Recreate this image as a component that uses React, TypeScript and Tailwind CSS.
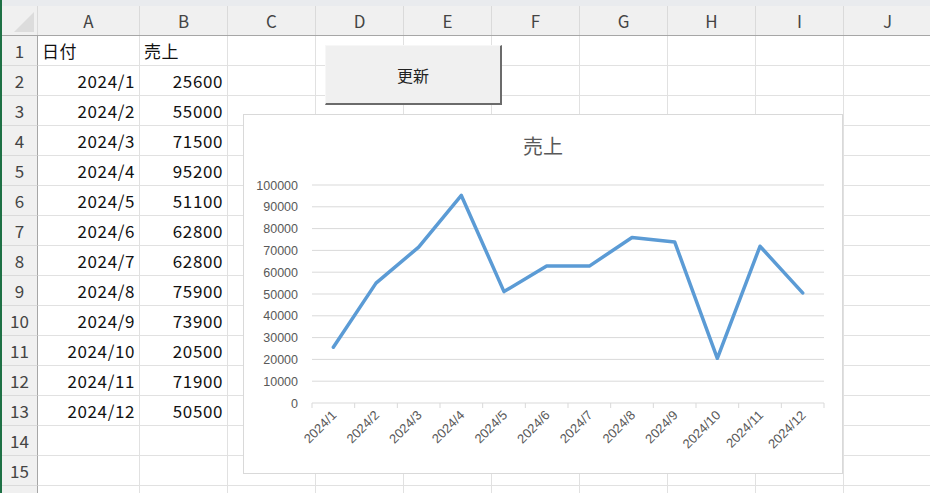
import React from "react";

const cols = ["A", "B", "C", "D", "E", "F", "G", "H", "I", "J"];
const colWidths = ["w-[102px]", "w-[88px]", "w-[88px]", "w-[88px]", "w-[88px]", "w-[88px]", "w-[88px]", "w-[88px]", "w-[88px]", "w-[88px]"];

const sales = [
  { d: "2024/1", v: 25600 },
  { d: "2024/2", v: 55000 },
  { d: "2024/3", v: 71500 },
  { d: "2024/4", v: 95200 },
  { d: "2024/5", v: 51100 },
  { d: "2024/6", v: 62800 },
  { d: "2024/7", v: 62800 },
  { d: "2024/8", v: 75900 },
  { d: "2024/9", v: 73900 },
  { d: "2024/10", v: 20500 },
  { d: "2024/11", v: 71900 },
  { d: "2024/12", v: 50500 },
];

const font = { fontFamily: '"Noto Sans CJK JP", "Noto Sans", sans-serif' };
const axisFont = { fontFamily: '"Liberation Sans", Arial, sans-serif' };

function cellText(row: number, col: number) {
  if (row === 1 && col === 0) return { t: "日付", right: false };
  if (row === 1 && col === 1) return { t: "売上", right: false };
  const item = sales[row - 2];
  if (item && col === 0) return { t: item.d, right: true };
  if (item && col === 1) return { t: String(item.v), right: true };
  return null;
}

function Chart() {
  const x0 = 312;
  const x1 = 824;
  const y0 = 403;
  const step = (x1 - x0) / 12;
  const sy = 21.8 / 10000;
  const pts = sales.map((s, i) => `${x0 + (i + 0.5) * step},${y0 - s.v * sy}`).join(" ");
  return (
    <div className="absolute left-[243px] top-[114px] w-[600px] h-[360px] bg-white border border-[#d9d9d9]">
      <div className="absolute left-0 right-0 top-[16px] text-center text-[20px] text-[#595959]" style={font}>
        売上
      </div>
      <svg className="absolute -left-px -top-px" width={600} height={360} viewBox="243 114 600 360">
        {Array.from({ length: 11 }).map((_, k) => {
          const y = y0 - k * 21.8;
          return (
            <g key={k}>
              <line x1={x0} x2={x1} y1={y} y2={y} stroke="#d9d9d9" strokeWidth={1} />
              <text x={298} y={y + 4.5} textAnchor="end" fontSize={12.5} fill="#595959" style={axisFont}>
                {k * 10000}
              </text>
            </g>
          );
        })}
        {Array.from({ length: 13 }).map((_, i) => (
          <line key={i} x1={x0 + i * step} x2={x0 + i * step} y1={y0} y2={y0 + 5} stroke="#d9d9d9" strokeWidth={1} />
        ))}
        {sales.map((s, i) => {
          const cx = x0 + (i + 0.5) * step + 4;
          const cy = y0 + 13;
          return (
            <text
              key={s.d}
              x={cx}
              y={cy}
              textAnchor="end"
              fontSize={13}
              fill="#595959"
              transform={`rotate(-45 ${cx} ${cy})`}
              style={axisFont}
            >
              {s.d}
            </text>
          );
        })}
        <polyline points={pts} fill="none" stroke="#5b9bd5" strokeWidth={3.5} strokeLinejoin="round" strokeLinecap="round" />
      </svg>
    </div>
  );
}

export default function App() {
  const rows = Array.from({ length: 16 }).map((_, i) => i + 1);
  return (
    <div className="relative w-[930px] h-[493px] overflow-hidden bg-white flex" style={font}>
      <div className="w-[2px] h-full bg-[#1e7145] shrink-0" />
      <div className="flex-1 flex flex-col">
        <div className="h-[6px] bg-[#e9ebee] shrink-0" />
        {/* column headers */}
        <div className="flex h-[30px] shrink-0 bg-[#f0f0f0] border-b border-[#a6a6a6]">
          <div className="w-[36px] shrink-0 relative border-r border-[#dadada]">
            <div className="absolute right-[3px] bottom-[3px] w-0 h-0 border-l-[20px] border-l-transparent border-b-[20px] border-b-[#dcdcdc]" />
          </div>
          {cols.map((c, i) => (
            <div
              key={c}
              className={`${colWidths[i]} shrink-0 flex items-center justify-center border-r border-[#dadada] text-[17px] text-[#444]`}
            >
              {c}
            </div>
          ))}
        </div>
        {rows.map((r) => (
          <div key={r} className="flex h-[30px] shrink-0">
            <div className="w-[36px] shrink-0 flex items-center justify-center bg-[#f0f0f0] border-r border-[#a6a6a6] border-b border-b-[#dadada] text-[17px] text-[#444]">
              {r < 16 ? r : ""}
            </div>
            {cols.map((c, i) => {
              const ct = cellText(r, i);
              return (
                <div
                  key={c}
                  className={`${colWidths[i]} shrink-0 flex items-center border-r border-b border-[#e1e1e1] text-[17px] tracking-[0.6px] text-[#111] ${
                    ct && ct.right ? "justify-end pr-[4px]" : "justify-start pl-[4px]"
                  }`}
                >
                  {ct ? ct.t : ""}
                </div>
              );
            })}
          </div>
        ))}
      </div>

      <button className="absolute left-[325px] top-[45px] w-[177px] h-[60px] bg-[#f0f0f0] border-t border-l border-t-[#f7f7f7] border-l-[#f7f7f7] border-r-2 border-b-2 border-r-[#6b6b6b] border-b-[#6b6b6b] text-[16px] text-[#222]">
        更新
      </button>

      <Chart />
    </div>
  );
}
